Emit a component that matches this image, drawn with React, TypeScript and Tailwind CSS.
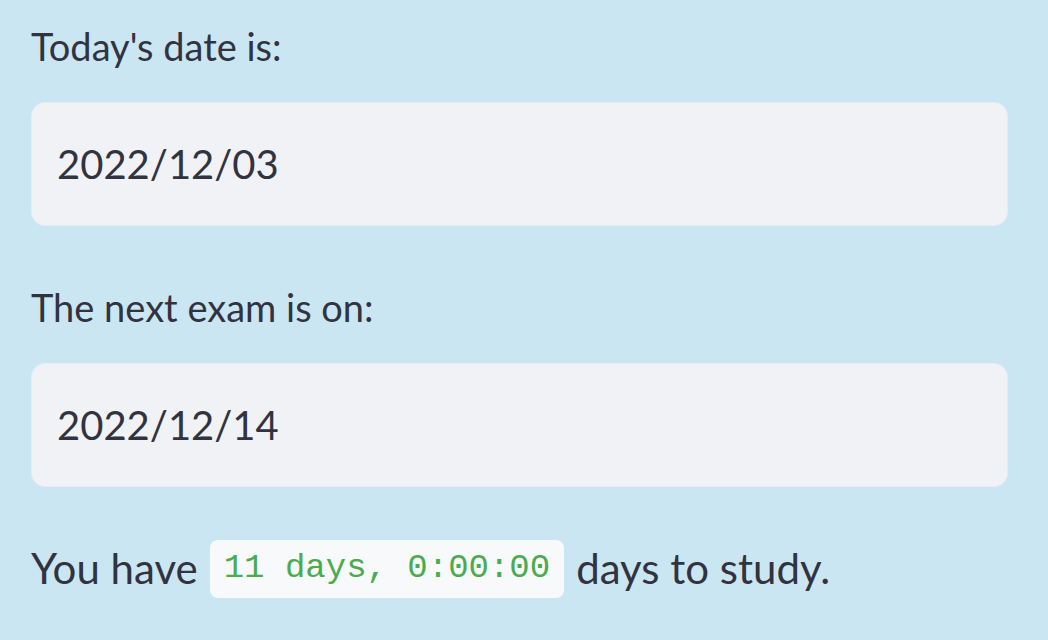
import React from 'react'

function DateField({ label, value }: { label: string; value: string }) {
  return (
    <div className="flex flex-col">
      <p className="text-[38px] leading-[40px] text-[#31333f]">{label}</p>
      <div className="mt-[36px] h-[124px] w-[977px] rounded-[14px] border border-[#e9edf3] bg-[#f0f2f6] flex items-center px-[25px]">
        <span className="text-[40px] text-[#31333f]">{value}</span>
      </div>
    </div>
  )
}

export default function App() {
  return (
    <div className="w-[1048px] h-[640px] bg-[#cbe6f3] pl-[31px] pt-[26px] flex flex-col font-['Lato',sans-serif]">
      <DateField label="Today's date is:" value="2022/12/03" />
      <div className="mt-[61px]">
        <DateField label="The next exam is on:" value="2022/12/14" />
      </div>
      <p className="mt-[50px] flex items-center text-[42px] text-[#31333f]">
        <span>You have</span>
        <code className="mx-[12px] h-[58px] px-[14px] rounded-[8px] bg-[#f7f9fb] text-[#4aab4f] text-[34px] flex items-center font-['Liberation_Mono',monospace]">11 days, 0:00:00</code>
        <span>days to study.</span>
      </p>
    </div>
  )
}
